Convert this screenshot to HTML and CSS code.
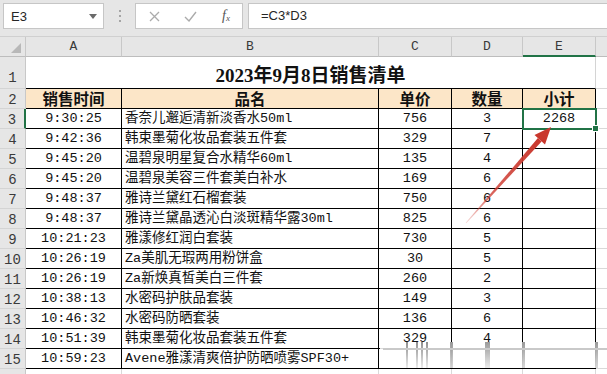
FILE: index.html
```html
<!DOCTYPE html>
<html lang="zh-CN">
<head>
  <meta charset="UTF-8" />
  <title>销售清单</title>
  <link rel="stylesheet" href="styles.css">
</head>
<body>

<div class="formula-bar">
  <div class="name-box">
    <span>E3</span>
    <svg class="caret" width="8" height="5" viewBox="0 0 8 5"><path d="M0 0h8L4 5z" fill="#6a6a6a"/></svg>
  </div>
  <div class="grip"><i></i><i></i><i></i></div>
  <div class="fx-box">
    <svg width="11" height="11" viewBox="0 0 11 11"><path d="M1 1l9 9M10 1l-9 9" stroke="#ababab" stroke-width="1.3"/></svg>
    <svg width="13" height="11" viewBox="0 0 13 11"><path d="M1 6l4 4 7-9" stroke="#ababab" stroke-width="1.4" fill="none"/></svg>
    <span class="fx">f<sub>x</sub></span>
  </div>
  <div class="formula">=C3*D3</div>
</div>

<div class="sheet">
  <!-- column headers -->
  <div class="ch corner"><span class="tri"></span></div>
  <div class="ch">A</div>
  <div class="ch">B</div>
  <div class="ch">C</div>
  <div class="ch">D</div>
  <div class="ch active-col">E</div>
  <div class="ch last"></div>

  <!-- row 1 -->
  <div class="rh tall">1</div>
  <div class="title">2023年9月8日销售清单</div>
  <div class="c blank"></div>

  <!-- row 2 -->
  <div class="rh">2</div>
  <div class="c hd">销售时间</div>
  <div class="c hd">品名</div>
  <div class="c hd">单价</div>
  <div class="c hd">数量</div>
  <div class="c hd">小计</div>
  <div class="c blank"></div>

  <div class="rh active-row">3</div>
  <div class="c num">9:30:25</div>
  <div class="c name">香奈儿邂逅清新淡香水50ml</div>
  <div class="c num">756</div>
  <div class="c num">3</div>
  <div class="c num selected">2268<span class="handle"></span></div>
  <div class="c blank"></div>

  <div class="rh">4</div>
  <div class="c num">9:42:36</div>
  <div class="c name">韩束墨菊化妆品套装五件套</div>
  <div class="c num">329</div>
  <div class="c num">7</div>
  <div class="c num"></div>
  <div class="c blank"></div>

  <div class="rh">5</div>
  <div class="c num">9:45:20</div>
  <div class="c name">温碧泉明星复合水精华60ml</div>
  <div class="c num">135</div>
  <div class="c num">4</div>
  <div class="c num"></div>
  <div class="c blank"></div>

  <div class="rh">6</div>
  <div class="c num">9:45:20</div>
  <div class="c name">温碧泉美容三件套美白补水</div>
  <div class="c num">169</div>
  <div class="c num">6</div>
  <div class="c num"></div>
  <div class="c blank"></div>

  <div class="rh">7</div>
  <div class="c num">9:48:37</div>
  <div class="c name">雅诗兰黛红石榴套装</div>
  <div class="c num">750</div>
  <div class="c num">6</div>
  <div class="c num"></div>
  <div class="c blank"></div>

  <div class="rh">8</div>
  <div class="c num">9:48:37</div>
  <div class="c name">雅诗兰黛晶透沁白淡斑精华露30ml</div>
  <div class="c num">825</div>
  <div class="c num">6</div>
  <div class="c num"></div>
  <div class="c blank"></div>

  <div class="rh">9</div>
  <div class="c num">10:21:23</div>
  <div class="c name">雅漾修红润白套装</div>
  <div class="c num">730</div>
  <div class="c num">5</div>
  <div class="c num"></div>
  <div class="c blank"></div>

  <div class="rh">10</div>
  <div class="c num">10:26:19</div>
  <div class="c name">Za美肌无瑕两用粉饼盒</div>
  <div class="c num">30</div>
  <div class="c num">5</div>
  <div class="c num"></div>
  <div class="c blank"></div>

  <div class="rh">11</div>
  <div class="c num">10:26:19</div>
  <div class="c name">Za新焕真皙美白三件套</div>
  <div class="c num">260</div>
  <div class="c num">2</div>
  <div class="c num"></div>
  <div class="c blank"></div>

  <div class="rh">12</div>
  <div class="c num">10:38:13</div>
  <div class="c name">水密码护肤品套装</div>
  <div class="c num">149</div>
  <div class="c num">3</div>
  <div class="c num"></div>
  <div class="c blank"></div>

  <div class="rh">13</div>
  <div class="c num">10:46:32</div>
  <div class="c name">水密码防晒套装</div>
  <div class="c num">136</div>
  <div class="c num">6</div>
  <div class="c num"></div>
  <div class="c blank"></div>

  <div class="rh">14</div>
  <div class="c num">10:51:39</div>
  <div class="c name">韩束墨菊化妆品套装五件套</div>
  <div class="c num">329</div>
  <div class="c num">4</div>
  <div class="c num"></div>
  <div class="c blank"></div>

  <div class="rh">15</div>
  <div class="c num">10:59:23</div>
  <div class="c name">Avene雅漾清爽倍护防晒喷雾SPF30+</div>
  <div class="c num"></div>
  <div class="c num"></div>
  <div class="c num"></div>
  <div class="c blank"></div>

  <!-- row 16, only its top edge is in view -->
  <div class="rh"></div>
  <div class="c grid"></div>
  <div class="c grid"></div>
  <div class="c grid"></div>
  <div class="c grid"></div>
  <div class="c grid"></div>
  <div class="c blank"></div>
</div>

<!-- red pointer drawn over the sheet -->
<svg class="arrow" width="607" height="374" viewBox="0 0 607 374">
  <defs>
    <linearGradient id="shaft" x1="466" y1="223" x2="540" y2="140" gradientUnits="userSpaceOnUse">
      <stop offset="0" stop-color="#d2433a" stop-opacity="0.2"/>
      <stop offset="0.35" stop-color="#cf3d33" stop-opacity="0.8"/>
      <stop offset="1" stop-color="#c9372d"/>
    </linearGradient>
  </defs>
  <polygon points="541.6,141.4 537.9,138.1 465.7,222.7 466.3,223.3" fill="url(#shaft)"/>
  <polygon points="551,127 545,144.4 534.5,135.1" fill="#c9372d"/>
</svg>

<div class="smear"></div>

</body>
</html>
```

FILE: styles.css
```css
body {
  margin: 0;
  width: 607px;
  height: 374px;
  overflow: hidden;
  position: relative;
  background: #ffffff;
  font-family: "Liberation Sans", Arial, sans-serif;
}

/* formula bar */
.formula-bar {
  display: flex;
  align-items: flex-start;
  height: 37px;
  box-sizing: border-box;
  padding: 3px 0 0 3px;
  background: #e6e6e6;
  border-bottom: 1px solid #d0d0d0;
}

.name-box {
  width: 101px;
  height: 26px;
  box-sizing: border-box;
  border: 1px solid #c6c6c6;
  background: #fff;
  display: flex;
  align-items: center;
  justify-content: space-between;
  padding: 0 6px 0 7px;
  font-size: 13px;
  color: #262626;
}

.grip {
  width: 31px;
  height: 26px;
  display: flex;
  flex-direction: column;
  align-items: center;
  justify-content: center;
  gap: 3px;
}

.grip i {
  width: 2px;
  height: 2px;
  background: #a5a5a5;
}

.fx-box {
  width: 108px;
  height: 26px;
  box-sizing: border-box;
  border: 1px solid #c6c6c6;
  background: #fff;
  display: grid;
  grid-template-columns: 36px 36px 36px;
  align-items: center;
  justify-items: center;
  margin-right: 5px;
}

.fx {
  font-family: "Liberation Serif", serif;
  font-style: italic;
  font-size: 14px;
  color: #555;
}

.fx sub {
  font-size: 9px;
  vertical-align: -1px;
}

.formula {
  flex: 1;
  height: 26px;
  box-sizing: border-box;
  border: 1px solid #c6c6c6;
  border-right: none;
  background: #fff;
  padding-left: 12px;
  line-height: 24px;
  font-size: 13px;
  color: #262626;
}

/* sheet grid */
.sheet {
  display: grid;
  grid-template-columns: 26px 96px 257px 73px 71px 73px 1fr;
  grid-template-rows: 20px 32px repeat(15, 20px);
}

.sheet > div {
  box-sizing: border-box;
  position: relative;
}

.ch {
  background: #e6e6e6;
  border-right: 1px solid #c8c8c8;
  border-bottom: 1px solid #bdbdbd;
  display: flex;
  align-items: center;
  justify-content: center;
  font-family: "Liberation Mono", monospace;
  font-size: 13px;
  color: #3a3a3a;
}

.ch.last {
  border-right: none;
}

.ch.active-col {
  border-bottom: 2px solid #217346;
}

.corner .tri {
  position: absolute;
  right: 4px;
  bottom: 3px;
  width: 0;
  height: 0;
  border-left: 10px solid transparent;
  border-bottom: 10px solid #b8b8b8;
}

.rh {
  background: #e6e6e6;
  border-right: 1px solid #c8c8c8;
  border-bottom: 1px solid #d4d4d4;
  display: flex;
  align-items: flex-end;
  justify-content: center;
  padding-bottom: 1px;
  font-family: "Liberation Mono", monospace;
  font-size: 14px;
  line-height: 1;
  color: #3a3a3a;
}

.rh.tall {
  padding-bottom: 3px;
}

.rh.active-row {
  border-right: 2px solid #217346;
}

.title {
  grid-column: 2 / 7;
  border-right: 1px solid #d4d4d4;
  border-bottom: 1px solid #000;
  display: flex;
  align-items: center;
  justify-content: center;
  padding-top: 2px;
  font-family: "Liberation Serif", "Noto Sans CJK SC", serif;
  font-size: 19px;
  font-weight: 700;
  color: #111;
}

.c {
  border-right: 1px solid #000;
  border-bottom: 1px solid #000;
  display: flex;
  align-items: center;
  justify-content: center;
  font-family: "Liberation Mono", "Noto Sans CJK SC", monospace;
  font-size: 13.5px;
  line-height: 1;
  color: #111;
  white-space: nowrap;
}

.c.name {
  justify-content: flex-start;
  padding-left: 3px;
}

.c.hd {
  background: #fce6c8;
  font-family: "Noto Sans CJK SC", sans-serif;
  font-size: 15.5px;
  font-weight: 700;
}

.c.blank {
  border-right: none;
  border-bottom: 1px solid #d9d9d9;
}

.c.grid {
  border-right: 1px solid #d9d9d9;
  border-bottom: 1px solid #d9d9d9;
}

.c.selected::after {
  content: "";
  position: absolute;
  left: -1px;
  top: -1px;
  right: -2px;
  bottom: -2px;
  border: 2px solid #217346;
  z-index: 2;
}

.handle {
  position: absolute;
  right: -4px;
  bottom: -4px;
  width: 5px;
  height: 5px;
  background: #217346;
  border: 1px solid #fff;
  z-index: 3;
}

/* overlays */
.arrow {
  position: absolute;
  left: 0;
  top: 0;
  pointer-events: none;
  z-index: 5;
}

.smear {
  position: absolute;
  left: 380px;
  top: 342px;
  width: 227px;
  height: 26px;
  z-index: 4;
  background:
    linear-gradient(#c9c9c9, #c9c9c9) 3px 6px / 224px 2px no-repeat,
    linear-gradient(#8f8f8f, rgba(160,160,160,0.2)) 26px 0 / 2px 100% no-repeat,
    linear-gradient(#8f8f8f, rgba(160,160,160,0.2)) 36px 0 / 2px 100% no-repeat,
    linear-gradient(#8f8f8f, rgba(160,160,160,0.2)) 41px 0 / 2px 100% no-repeat,
    linear-gradient(#8f8f8f, rgba(160,160,160,0.2)) 46px 0 / 2px 100% no-repeat,
    linear-gradient(#9a9a9a, rgba(160,160,160,0.4)) 70px 0 / 3px 100% no-repeat,
    linear-gradient(#9a9a9a, rgba(160,160,160,0.2)) 105px 0 / 5px 100% no-repeat,
    linear-gradient(#9a9a9a, rgba(160,160,160,0.4)) 142px 0 / 3px 100% no-repeat,
    linear-gradient(#9a9a9a, rgba(160,160,160,0.4)) 215px 0 / 3px 100% no-repeat,
    linear-gradient(rgba(255,255,255,0.82), rgba(255,255,255,0.96));
}
```
